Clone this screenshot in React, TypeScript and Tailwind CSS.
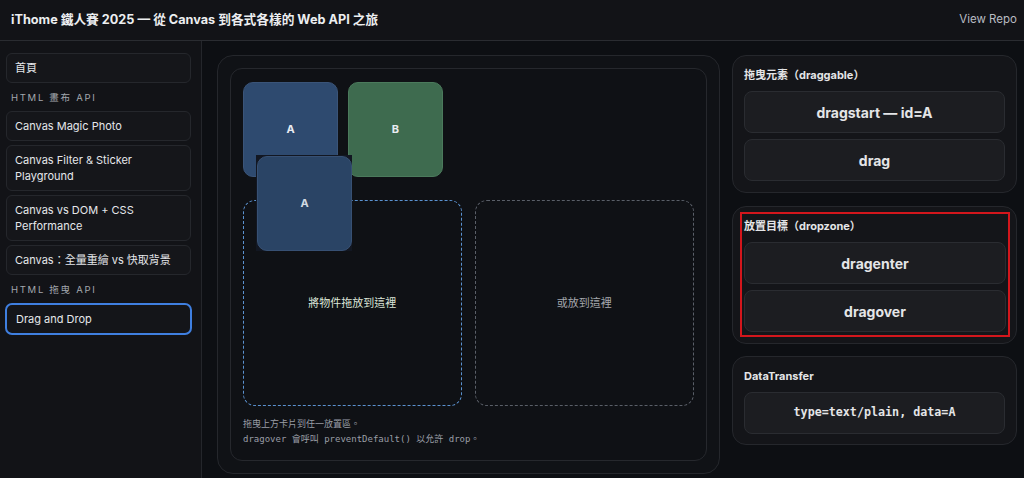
import React from "react";

const sans = { fontFamily: 'Inter, "Noto Sans CJK TC", "Noto Sans", sans-serif' };
const mono = { fontFamily: '"DejaVu Sans Mono", "Noto Sans CJK TC", monospace' };

function NavItem({ children, active }: { children: React.ReactNode; active?: boolean }) {
  return (
    <div
      className={
        active
          ? "mx-[-1px] rounded-[7px] border-2 border-[#3f7fe0] bg-[#141519] px-[9px] py-[6px] text-[11px] leading-[16px] text-[#e5e7eb]"
          : "rounded-[6px] border border-[#25272c] bg-[#15161a] px-[8px] py-[6px] text-[11px] leading-[16px] text-[#e5e7eb]"
      }
    >
      {children}
    </div>
  );
}

function SectionLabel({ children }: { children: React.ReactNode }) {
  return (
    <div className="px-[5px] pt-[4px] pb-[2px] text-[9.5px] leading-[14px] tracking-[0.18em] text-[#a3a7ae]">
      {children}
    </div>
  );
}

function EvBox({ children, isMono }: { children: React.ReactNode; isMono?: boolean }) {
  return (
    <div
      className={
        "flex h-[42px] items-center justify-center rounded-[8px] border border-[#2a2c31] bg-[#1c1d21] font-bold text-[#e4e5e7] " +
        (isMono ? "text-[11.7px]" : "text-[14px]")
      }
      style={isMono ? mono : undefined}
    >
      {children}
    </div>
  );
}

export default function App() {
  return (
    <div className="flex h-[478px] w-[1024px] flex-col overflow-hidden bg-[#0d0f13] text-white" style={sans}>
      {/* header */}
      <div className="flex h-[41px] shrink-0 items-center justify-between border-b border-[#2a2c31] bg-[#121317] pl-[11px] pr-[7px]">
        <div className="text-[12.7px] font-bold text-[#eceef0]">iThome 鐵人賽 2025 — 從 Canvas 到各式各樣的 Web API 之旅</div>
        <div className="text-[11.5px] text-[#b9bcc2]">View Repo</div>
      </div>
      <div className="flex min-h-0 flex-1">
        {/* sidebar */}
        <div className="flex w-[202px] shrink-0 flex-col gap-[4px] border-r border-[#24262b] bg-[#121317] pl-[6px] pr-[10px] pt-[12px]">
          <NavItem>首頁</NavItem>
          <SectionLabel>HTML 畫布 API</SectionLabel>
          <NavItem>Canvas Magic Photo</NavItem>
          <NavItem>
            Canvas Filter &amp; Sticker
            <br />
            Playground
          </NavItem>
          <NavItem>
            Canvas vs DOM + CSS
            <br />
            Performance
          </NavItem>
          <NavItem>Canvas：全量重繪 vs 快取背景</NavItem>
          <SectionLabel>HTML 拖曳 API</SectionLabel>
          <NavItem active>Drag and Drop</NavItem>
        </div>
        {/* main */}
        <div className="flex flex-1 gap-[12px] pl-[15px] pr-[7px] pt-[14px]">
          <div className="h-[419px] w-[503px] shrink-0 rounded-[16px] border border-[#25272c] bg-[#101216] p-[12px]">
            <div className="relative h-[393px] rounded-[12px] border border-[#26282d] bg-[#0f1115] px-[12px] pt-[13px]">
              <div className="flex gap-[10px]">
                <div className="flex h-[95px] w-[95px] items-center justify-center rounded-[10px] border border-[#3a5478] bg-[#2e4a6f] text-[11px] font-bold text-[#e8ecf2]">
                  A
                </div>
                <div className="flex h-[95px] w-[95px] items-center justify-center rounded-[10px] border border-[#4b7a5c] bg-[#3e6b4f] text-[11px] font-bold text-[#e8ecf2]">
                  B
                </div>
              </div>
              <div className="mt-[23px] flex gap-[13px]">
                <div className="flex h-[206px] w-[219px] items-center justify-center rounded-[12px] border-[1.5px] border-dashed border-[#5b92d0] text-[11px] text-[#dde5d9]">
                  將物件拖放到這裡
                </div>
                <div className="flex h-[206px] w-[220px] items-center justify-center rounded-[12px] border-[1.5px] border-dashed border-[#5a5f68] text-[11px] text-[#a6a9ae]">
                  或放到這裡
                </div>
              </div>
              <div className="mt-[11px] text-[9px] leading-[15px] text-[#9a9ea6]" style={mono}>
                <div>拖曳上方卡片到任一放置區。</div>
                <div>dragover 會呼叫 preventDefault() 以允許 drop。</div>
              </div>
              {/* drag ghost */}
              <div className="absolute left-[25px] top-[86px] h-[96px] w-[96px] bg-[#121722]">
                <div className="flex h-[95px] w-[95px] translate-x-[1px] translate-y-[1px] items-center justify-center rounded-[10px] border border-[#3a5478] bg-[#2c4769] text-[11px] font-bold text-[#dfe5ee] opacity-95">
                  A
                </div>
              </div>
            </div>
          </div>
          {/* right column */}
          <div className="flex w-[285px] shrink-0 flex-col">
            <div className="rounded-[14px] border border-[#25272c] bg-[#141519] px-[11px] pb-[11px] pt-[11px]">
              <div className="mb-[8px] text-[11px] font-bold leading-[16px] text-[#e4e5e7]">拖曳元素（draggable）</div>
              <div className="flex flex-col gap-[6px]">
                <EvBox>dragstart — id=A</EvBox>
                <EvBox>drag</EvBox>
              </div>
            </div>
            <div className="mt-[13px] rounded-[14px] border border-[#25272c] bg-[#141519] pb-[6px] pl-[7px] pr-[6px] pt-[5px]">
              <div className="border-2 border-[#d3161c] pb-[3px] pl-[2px] pr-[2px] pt-[4px]">
                <div className="mb-[8px] text-[11px] font-bold leading-[16px] text-[#e4e5e7]">放置目標（dropzone）</div>
                <div className="flex flex-col gap-[6px]">
                  <EvBox>dragenter</EvBox>
                  <EvBox>dragover</EvBox>
                </div>
              </div>
            </div>
            <div className="mt-[12px] rounded-[14px] border border-[#25272c] bg-[#141519] px-[11px] pb-[10px] pt-[11px]">
              <div className="mb-[8px] text-[11px] font-bold leading-[16px] text-[#e4e5e7]">DataTransfer</div>
              <EvBox isMono>type=text/plain, data=A</EvBox>
            </div>
          </div>
        </div>
      </div>
    </div>
  );
}
